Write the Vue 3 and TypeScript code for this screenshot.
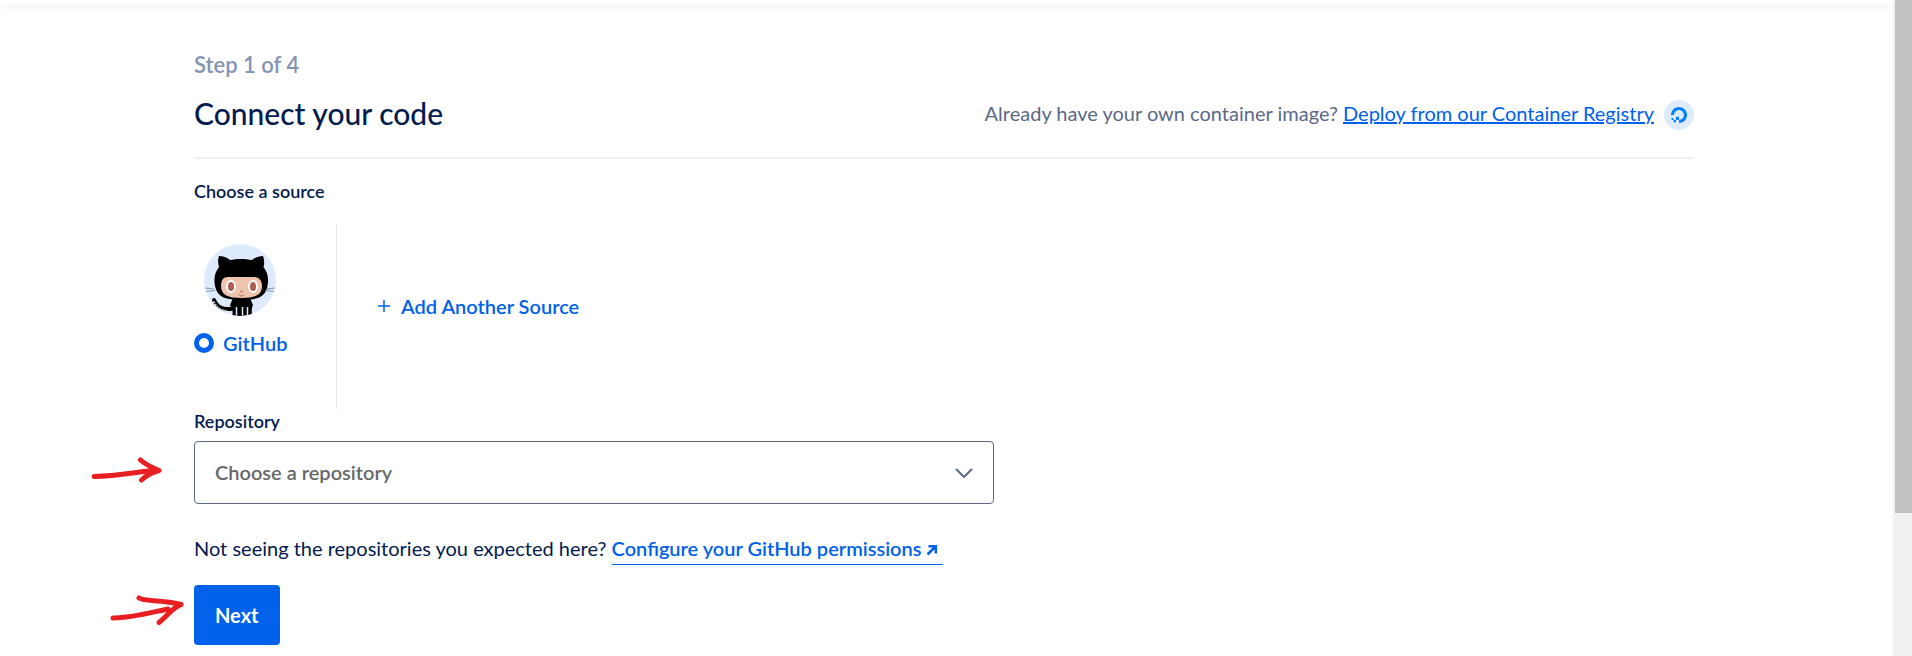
<script setup lang="ts">
import { ref } from 'vue'

const source = ref<string>('github')
const repository = ref<string>('')
const repositories: string[] = []
</script>

<template>
  <div class="page">
    <div class="view">
      <div class="topbar"></div>
      <main class="content">
        <p class="step">Step 1 of 4</p>
        <header class="heading">
          <h1>Connect your code</h1>
          <div class="registry">
            <p>
              Already have your own container image?
              <a href="#registry">Deploy from our Container Registry</a>
            </p>
            <span class="logo">
              <svg viewBox="0 0 24 24" width="16" height="16" aria-hidden="true">
                <path
                  fill="#0080ff"
                  d="M12.04 0C5.408-.02.005 5.37.005 11.992h4.638c0-4.923 4.882-8.731 10.064-6.855a6.95 6.95 0 014.147 4.148c1.889 5.177-1.924 10.055-6.84 10.064v-4.61H7.391v4.623h4.61V24c7.86 0 13.967-7.588 11.397-15.83-1.115-3.59-3.985-6.446-7.575-7.575A12.8 12.8 0 0012.039 0zM7.39 19.362H3.828v3.564H7.39zm-3.563 0v-2.978H.85v2.978z"
                />
              </svg>
            </span>
          </div>
        </header>

        <h2 class="label">Choose a source</h2>
        <div class="sources">
          <label class="source">
            <svg class="avatar" viewBox="0 0 72 72" aria-hidden="true">
              <defs>
                <clipPath id="disc"><circle cx="36" cy="36" r="36" /></clipPath>
              </defs>
              <circle cx="36" cy="36" r="36" fill="#deebfd" />
              <g clip-path="url(#disc)">
                <path
                  d="M10 56c3 7 8 10.500 19 8.500"
                  fill="none"
                  stroke="#000"
                  stroke-width="4"
                  stroke-linecap="round"
                />
                <path
                  d="M9.500 57.500c3 6 7 9.500 14 9.500"
                  fill="none"
                  stroke="#c5dcd8"
                  stroke-width="2"
                  stroke-dasharray="2 1"
                />
                <path d="M28 73c1-4 1-7-2-12l3-7h17l3 7c-2 4-1 8-1 12z" fill="#000" />
                <path d="M32.500 74V63M38.500 74V63M43.500 74V63" stroke="#deebfd" stroke-width="1.500" />
                <path
                  d="M15 12c4 0 8 1.500 11 4 6-1.500 16-1.500 22 0 3-2.500 7-4 11-4 1.500 4 1.500 8 .5 11 4 5 5.500 11 4 19-2 11-10 14-26 14S13 53 11 42c-1.500-8 0-14 4-19-1-3-1.500-7 0-11z"
                  fill="#000"
                />
                <path
                  d="M24 33h26c6 0 8 5 8 9 0 9-7 12-20.500 12S17 51 17 42c0-4 1-9 7-9z"
                  fill="#eec4ad"
                />
                <ellipse cx="27" cy="42.500" rx="5" ry="6.500" fill="#fff" />
                <ellipse cx="49" cy="42.500" rx="5" ry="6.500" fill="#fff" />
                <ellipse cx="27" cy="42.500" rx="3" ry="4.500" fill="#ad5c51" />
                <ellipse cx="49" cy="42.500" rx="3" ry="4.500" fill="#ad5c51" />
                <ellipse cx="37.500" cy="47.500" rx="1" ry="1" fill="#ad5c51" />
                <path d="M35 50.500c1 2 4 2 5 0" fill="none" stroke="#ad5c51" />
                <path
                  d="M1 44l9 1M1 47.500l10-1M71 44l-9 1M71 47.500l-10-1"
                  fill="none"
                  stroke="#5e6f85"
                  stroke-width=".7"
                />
              </g>
            </svg>
            <span class="choice">
              <input v-model="source" type="radio" name="source" value="github" />
              GitHub
            </span>
          </label>
          <button class="add" type="button">
            <svg viewBox="0 0 12 12" width="12" height="12" aria-hidden="true">
              <path d="M6 0v12M0 6h12" stroke="currentColor" stroke-width="1.500" />
            </svg>
            Add Another Source
          </button>
        </div>

        <label class="label" for="repository">Repository</label>
        <div class="select">
          <select id="repository" v-model="repository">
            <option value="">Choose a repository</option>
            <option v-for="name in repositories" :key="name" :value="name">{{ name }}</option>
          </select>
          <svg class="chevron" viewBox="0 0 18 10" width="18" height="10" aria-hidden="true">
            <path d="M1 1l8 8 8-8" fill="none" stroke="#5b6987" stroke-width="2" />
          </svg>
          <svg class="pointer to-select" viewBox="0 0 72 30" aria-hidden="true">
            <path d="M4 22.500C28 22 46 18 68 16M50.500 6C56 11 62 13.500 69 16.500 63 18 57 21 51.500 26" />
          </svg>
        </div>

        <p class="hint">
          Not seeing the repositories you expected here?
          <a href="#permissions">Configure your GitHub permissions<svg
            viewBox="0 0 12 12" width="12" height="12" aria-hidden="true"
          >
            <path d="M1.500 10.500L9 3M2.500 2.200h7.300v7.300" fill="none" stroke="currentColor" stroke-width="2.600" />
          </svg></a>
        </p>

        <div class="actions">
          <button class="next" type="button">Next</button>
          <svg class="pointer to-next" viewBox="0 0 76 34" aria-hidden="true">
            <path
              d="M4 24C22 24 40 19 59 15M30 4C36 8 52 5 72 10.500 64 13 57 23 50 28.500"
            />
          </svg>
        </div>
      </main>
    </div>
    <div class="scrollbar"><div class="thumb"></div></div>
  </div>
</template>

<style>
body {
  margin: 0;
  background: #fff;
}
</style>

<style scoped>
.page {
  display: flex;
  min-height: 100vh;
  font-family: Lato, "Liberation Sans", sans-serif;
  font-size: 20px;
  line-height: 28px;
  color: #031b4e;
}
.view {
  flex: 1;
  min-width: 0;
}
.topbar {
  height: 5px;
  box-shadow: 0 2px 6px rgba(0, 0, 0, 0.06);
}
.content {
  padding: 46px 199px 0 194px;
}
p,
h1,
h2 {
  margin: 0;
}
a {
  color: #0061eb;
}
.step {
  font-size: 22px;
  font-weight: 600;
  color: #8494b3;
}
.heading {
  display: flex;
  align-items: center;
  justify-content: space-between;
  height: 78px;
  border-bottom: 2px solid #f0f0f1;
}
.heading h1 {
  padding-bottom: 10px;
  font-size: 30px;
  line-height: 40px;
  font-weight: 500;
}
.registry {
  display: flex;
  align-items: center;
  gap: 10px;
  padding-bottom: 6px;
  color: #5b6987;
}
.registry p {
  padding-bottom: 4px;
}
.logo {
  display: flex;
  align-items: center;
  justify-content: center;
  width: 30px;
  height: 30px;
  border-radius: 50%;
  background: #deebfd;
}
.label {
  display: block;
  font-size: 18px;
  line-height: 24px;
  font-weight: 600;
}
h2.label {
  padding-top: 20px;
}
.sources {
  display: flex;
  height: 185px;
  margin-top: 21px;
}
.source {
  box-sizing: border-box;
  width: 143px;
  padding: 20px 0 0;
  border-right: 1px solid #e5e8ed;
  color: #0061eb;
  font-weight: 600;
}
.avatar {
  display: block;
  width: 72px;
  height: 72px;
  margin-left: 10px;
}
.choice {
  display: flex;
  align-items: center;
  gap: 9px;
  margin-top: 13px;
}
.choice input {
  appearance: none;
  box-sizing: border-box;
  width: 20px;
  height: 20px;
  margin: 0;
  border: 5px solid #0061eb;
  border-radius: 50%;
  background: #fff;
}
button {
  font: inherit;
  font-weight: 600;
  border: 0;
  cursor: pointer;
}
.add {
  display: flex;
  align-items: center;
  gap: 11px;
  align-self: flex-start;
  margin: 68px 0 0 41px;
  padding: 0;
  background: none;
  color: #0061eb;
}
.label + .select {
  margin-top: 8px;
}
.select {
  position: relative;
  width: 800px;
  max-width: 100%;
}
.select select {
  display: block;
  appearance: none;
  box-sizing: border-box;
  width: 100%;
  height: 63px;
  padding: 0 60px 2px 20px;
  border: 1px solid #5b6987;
  border-radius: 4px;
  background: #fff;
  color: #676767;
  font: inherit;
  font-weight: 600;
}
.chevron {
  position: absolute;
  right: 21px;
  top: 27px;
}
.hint {
  margin-top: 30px;
}
.hint a {
  display: inline-block;
  padding: 0 5px 2px 0;
  border-bottom: 1px solid #0061eb;
  font-weight: 600;
  text-decoration: none;
}
.hint a svg {
  margin-left: 5px;
}
.actions {
  position: relative;
  margin-top: 20px;
}
.next {
  display: block;
  height: 60px;
  padding: 0 21px;
  border-radius: 4px;
  background: #0061eb;
  color: #fff;
  font-weight: 700;
}
.pointer {
  position: absolute;
  fill: none;
  stroke: #e81e20;
  stroke-width: 5;
  stroke-linecap: round;
  stroke-linejoin: round;
}
.to-select {
  left: -104px;
  top: 13px;
  width: 72px;
  height: 30px;
}
.to-next {
  left: -85px;
  top: 9px;
  width: 76px;
  height: 34px;
}
.scrollbar {
  box-sizing: border-box;
  width: 19px;
  padding-left: 2px;
  background: #f0f0f0;
}
.thumb {
  height: 513px;
  background: #c1c1c1;
}
</style>
